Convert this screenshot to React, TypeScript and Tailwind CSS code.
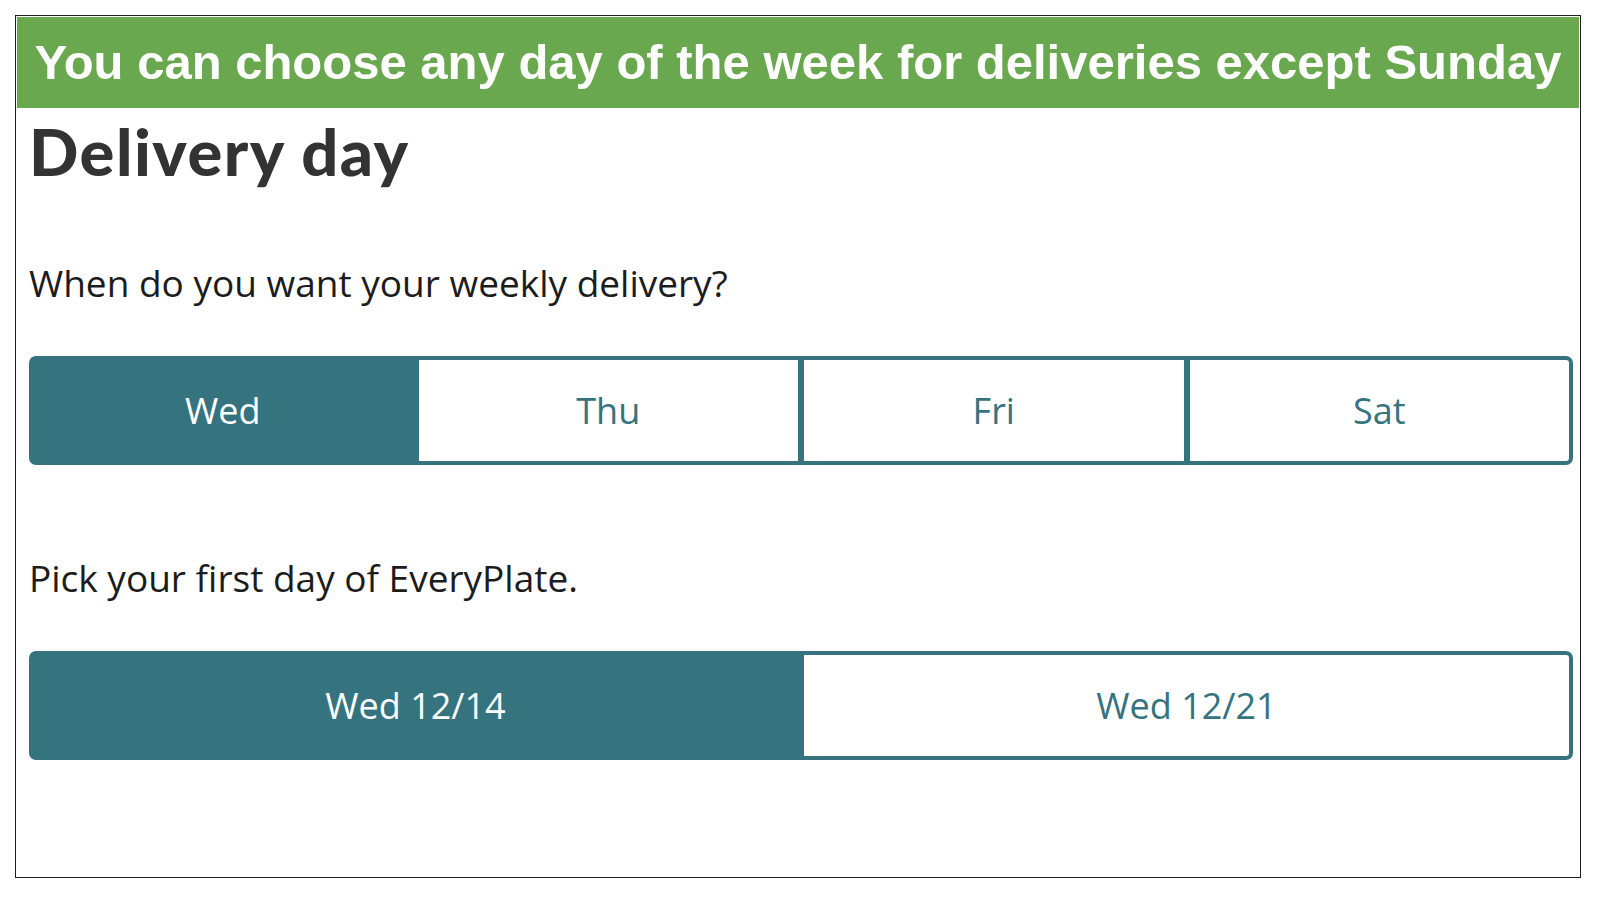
const days = ["Wed", "Thu", "Fri", "Sat"];
const dates = ["Wed 12/14", "Wed 12/21"];

function Segmented({ items, selected }: { items: string[]; selected: number }) {
  return (
    <div className="flex h-[109px] w-[1544px] overflow-hidden rounded-[7px] border-[4px] border-[#35737f] bg-[#35737f] gap-[6px]">
      {items.map((item, i) => (
        <div
          key={item}
          className={`flex flex-1 items-center justify-center text-[36px] ${
            i === selected ? "bg-[#35737f] text-white" : "bg-white text-[#35737f]"
          }`}
          style={{ fontFamily: '"Open Sans", sans-serif' }}
        >
          {item}
        </div>
      ))}
    </div>
  );
}

export default function App() {
  return (
    <div className="h-[900px] w-[1600px] bg-white pl-[15px] pt-[15px]">
      <div className="flex h-[863px] w-[1566px] flex-col border border-[#1f1f1f] p-px">
        <div
          className="flex h-[91px] items-center justify-center bg-[#6aa84f] text-[49px] font-bold text-white"
          style={{ fontFamily: '"Liberation Sans", Arial, sans-serif' }}
        >
          You can choose any day of the week for deliveries except Sunday
        </div>
        <div className="flex flex-col pl-[12px]">
          <h1
            className="mt-[3px] text-[65px] font-black leading-[80px] tracking-[1.5px] text-[#333333]"
            style={{ fontFamily: "Lato, sans-serif" }}
          >
            Delivery day
          </h1>
          <p
            className="mt-[67px] text-[37px] leading-[50px] text-[#1c1c1c]"
            style={{ fontFamily: '"Open Sans", sans-serif' }}
          >
            When do you want your weekly delivery?
          </p>
          <div className="mt-[48px]">
            <Segmented items={days} selected={0} />
          </div>
          <p
            className="mt-[88px] text-[37px] leading-[50px] text-[#1c1c1c]"
            style={{ fontFamily: '"Open Sans", sans-serif' }}
          >
            Pick your first day of EveryPlate.
          </p>
          <div className="mt-[48px]">
            <Segmented items={dates} selected={0} />
          </div>
        </div>
      </div>
    </div>
  );
}
